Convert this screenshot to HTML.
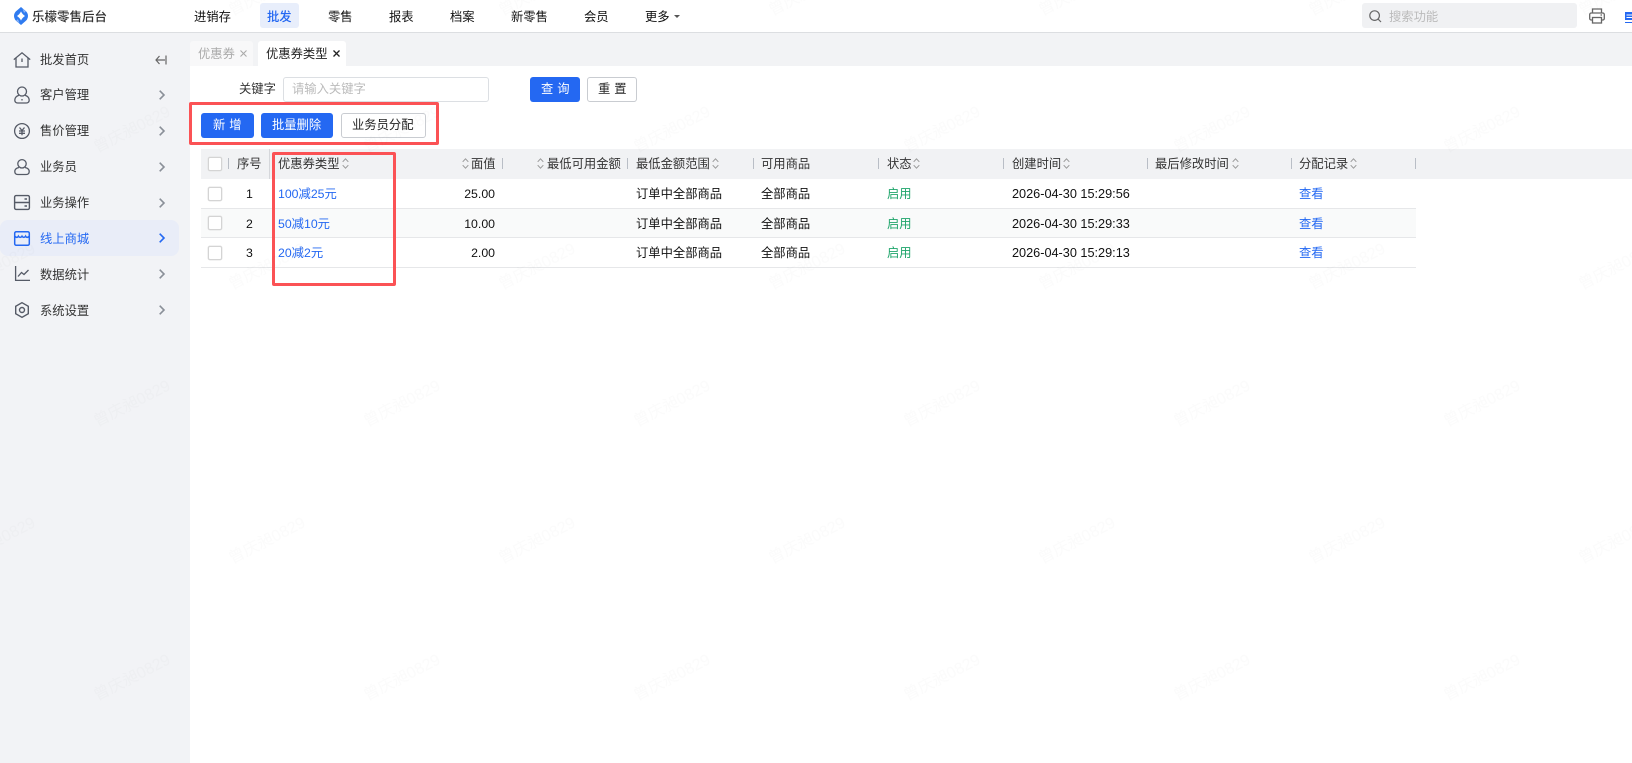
<!DOCTYPE html>
<html lang="zh"><head><meta charset="utf-8"><title>优惠券类型</title>
<style>
html,body{margin:0;padding:0;width:1632px;height:763px;overflow:hidden;background:#fff}
body{position:relative;font-family:"Liberation Sans","Noto Sans CJK SC",sans-serif;font-size:12.3px;color:#333}
.t{position:absolute;white-space:nowrap;line-height:18px}
.b{position:absolute}
.c{position:absolute;width:12px;height:12px;border:1px solid #d4d4d4;border-radius:2px;background:#fff;box-shadow:0 0 0 .5px #e4e4e4}
.s{position:absolute;width:1px;height:11px;top:158px;background:#b9bec6}
.k{color:#111}.l{color:#2468f2}.g{color:#1fa56b}
.h{color:#333}
.d{font-size:12.7px}
svg{position:absolute;overflow:visible}
.red{position:absolute;border:3px solid #fb5255;border-radius:2px;box-sizing:border-box}
</style></head><body>

<!-- backgrounds -->
<div class="b" style="left:0;top:33px;width:1632px;height:730px;background:#f2f3f5"></div>
<div class="b" style="left:0;top:33px;width:190px;height:730px;background:#f2f3f6"></div>
<div class="b" style="left:190px;top:66px;width:1442px;height:697px;background:#fff"></div>
<div class="b" style="left:0;top:32px;width:1632px;height:1px;background:#dcdee1"></div>

<!-- header -->
<svg style="left:14px;top:7px" width="14" height="18" viewBox="0 0 14 18"><path fill="#2f7bf0" d="M7 0 L10.500 3 Q14 5.500 14 9 Q14 12.500 10.500 15 L7 18 L3.500 15 Q0 12.500 0 9 Q0 5.500 3.500 3 Z"/><path fill="#fff" d="M7 4.400 Q8.200 7.200 11 9 Q8.200 10.800 7 13.600 Q5.800 10.800 3 9 Q5.800 7.200 7 4.400Z"/><path fill="#fff" d="M8.600 1.800 L11.800 4.800 L10 5.800Z" opacity=".45"/><path fill="#fff" d="M5.400 16.200 L2.200 13.200 L4 12.200Z" opacity=".45"/></svg>
<div class="t" style="left:32px;top:8px;font-size:12.5px;font-weight:500;color:#333">乐檬零售后台</div>

<div class="b" style="left:260px;top:3px;width:39px;height:25px;background:#e8eefb;border-radius:3px"></div>
<div class="t k" style="left:194px;top:8px;font-size:12.3px">进销存</div>
<div class="t l" style="left:267px;top:8px;font-size:12.3px;font-weight:500">批发</div>
<div class="t k" style="left:328px;top:8px;font-size:12.3px">零售</div>
<div class="t k" style="left:389px;top:8px;font-size:12.3px">报表</div>
<div class="t k" style="left:450px;top:8px;font-size:12.3px">档案</div>
<div class="t k" style="left:511px;top:8px;font-size:12.3px">新零售</div>
<div class="t k" style="left:584px;top:8px;font-size:12.3px">会员</div>
<div class="t k" style="left:645px;top:8px;font-size:12.3px">更多</div>
<svg style="left:674px;top:15px" width="6" height="3" viewBox="0 0 6 3"><path fill="#555" d="M0 0H6L3 3Z"/></svg>

<div class="b" style="left:1362px;top:3px;width:215px;height:25px;background:#f0f1f3;border-radius:3px"></div>
<svg style="left:1369px;top:10px" width="13" height="13" viewBox="0 0 13 13" fill="none" stroke="#666" stroke-width="1.200"><circle cx="5.600" cy="5.600" r="4.800"/><path d="M9.200 9.200L12 12"/></svg>
<div class="t" style="left:1389px;top:8px;color:#bbb;font-size:12.3px">搜索功能</div>
<svg style="left:1589px;top:8px" width="16" height="16" viewBox="0 0 16 16" fill="none" stroke="#666" stroke-width="1.300"><path d="M3.500 5V1h9v4"/><rect x=".7" y="5" width="14.600" height="7" rx="1.500"/><rect x="3.500" y="9.500" width="9" height="5.500" fill="#fff"/><path d="M11.500 7h1.500"/></svg>
<svg style="left:1625px;top:12px" width="7" height="11" viewBox="0 0 7 11"><path fill="#2468f2" d="M0 0H7V8H0Z"/><path stroke="#fff" d="M1.500 3H7M1.500 5.500H7"/><path stroke="#2468f2" d="M0 10.500H7"/></svg>

<!-- sidebar -->
<div class="b" style="left:0;top:220px;width:179px;height:36px;background:#e9edf8;border-radius:8px"></div>
<svg style="left:13px;top:52px" width="18" height="16" viewBox="0 0 18 16" fill="none" stroke="#555a66" stroke-width="1.300"><path d="M.8 7.600L9 .8l8.200 6.800"/><path d="M3 6v9h12V6"/><path d="M9 6.500v3.500"/></svg>
<svg style="left:14px;top:86px" width="16" height="18" viewBox="0 0 16 18" fill="none" stroke="#555a66" stroke-width="1.300"><circle cx="8" cy="5.500" r="4.500"/><path d="M5 9.200C2.500 10 .8 11.500.8 14c0 2 1.200 3 3 3h8.400c1.800 0 3-1 3-3 0-2.500-1.700-4-4.200-4.800"/><path d="M8 13v1.500"/></svg>
<svg style="left:14px;top:123px" width="16" height="16" viewBox="0 0 16 16" fill="none" stroke="#555a66" stroke-width="1.300"><circle cx="8" cy="8" r="7.400"/><path d="M5.500 4.500L8 7.500l2.500-3M5 8h6M5 10.300h6M8 7.500V12.200"/></svg>
<svg style="left:14px;top:159px" width="16" height="16" viewBox="0 0 16 16" fill="none" stroke="#555a66" stroke-width="1.300"><circle cx="8" cy="4.800" r="4.200"/><path d="M5 8.500C2.500 9 .8 10.500.8 12.500c0 2 1.200 3 3 3h8.400c1.800 0 3-1 3-3 0-2-1.700-3.500-4.200-4"/></svg>
<svg style="left:14px;top:195px" width="16" height="15" viewBox="0 0 16 15" fill="none" stroke="#555a66" stroke-width="1.400"><rect x=".6" y=".6" width="14.800" height="13.800" rx="1.500"/><path d="M.6 7.500h14.800M10.500 4h2.500M10.500 11h2.500"/></svg>
<svg style="left:14px;top:231px" width="16" height="15" viewBox="0 0 16 15" fill="none" stroke="#2468f2" stroke-width="1.500"><rect x=".7" y=".7" width="14.600" height="13.600" rx="1.500"/><path d="M.7 5.200c1.500 1.500 3 1.500 3.700 0 .8 1.500 2.800 1.500 3.600 0 .8 1.500 2.800 1.500 3.600 0 .7 1.500 2.200 1.500 3.700 0"/></svg>
<svg style="left:15px;top:266px" width="15" height="15" viewBox="0 0 15 15" fill="none" stroke="#555a66" stroke-width="1.300"><path d="M.6 0v14.400H15"/><path d="M3 10.500l3.500-4 2.500 2 4.500-4.500"/></svg>
<svg style="left:15px;top:302px" width="14" height="16" viewBox="0 0 14 16" fill="none" stroke="#555a66" stroke-width="1.400"><path d="M7 .7l6.300 3.600v7.400L7 15.300.7 11.700V4.300Z"/><circle cx="7" cy="8" r="2.500"/></svg>

<div class="t" style="left:40px;top:51px">批发首页</div>
<div class="t" style="left:40px;top:86px">客户管理</div>
<div class="t" style="left:40px;top:122px">售价管理</div>
<div class="t" style="left:40px;top:158px">业务员</div>
<div class="t" style="left:40px;top:194px">业务操作</div>
<div class="t l" style="left:40px;top:230px">线上商城</div>
<div class="t" style="left:40px;top:266px">数据统计</div>
<div class="t" style="left:40px;top:302px">系统设置</div>

<svg style="left:155px;top:55px" width="12" height="10" viewBox="0 0 12 10" fill="none" stroke="#666" stroke-width="1.200"><path d="M4.500 1L1 5l3.500 4M1 5h9M11 .5v9"/></svg>
<svg style="left:159px;top:90px" width="6" height="10" viewBox="0 0 6 10" fill="none" stroke="#8a8f98" stroke-width="1.600"><path d="M.7.700L5 5 .7 9.300"/></svg>
<svg style="left:159px;top:126px" width="6" height="10" viewBox="0 0 6 10" fill="none" stroke="#8a8f98" stroke-width="1.600"><path d="M.7.700L5 5 .7 9.300"/></svg>
<svg style="left:159px;top:162px" width="6" height="10" viewBox="0 0 6 10" fill="none" stroke="#8a8f98" stroke-width="1.600"><path d="M.7.700L5 5 .7 9.300"/></svg>
<svg style="left:159px;top:198px" width="6" height="10" viewBox="0 0 6 10" fill="none" stroke="#8a8f98" stroke-width="1.600"><path d="M.7.700L5 5 .7 9.300"/></svg>
<svg style="left:159px;top:233px" width="6" height="10" viewBox="0 0 6 10" fill="none" stroke="#2468f2" stroke-width="1.600"><path d="M.7.700L5 5 .7 9.300"/></svg>
<svg style="left:159px;top:269px" width="6" height="10" viewBox="0 0 6 10" fill="none" stroke="#8a8f98" stroke-width="1.600"><path d="M.7.700L5 5 .7 9.300"/></svg>
<svg style="left:159px;top:305px" width="6" height="10" viewBox="0 0 6 10" fill="none" stroke="#8a8f98" stroke-width="1.600"><path d="M.7.700L5 5 .7 9.300"/></svg>

<!-- tabs -->
<div class="b" style="left:190px;top:41px;width:63px;height:25px;background:#f8f8f9;border-radius:3px 3px 0 0"></div>
<div class="b" style="left:258px;top:41px;width:88px;height:25px;background:#fff;border-radius:3px 3px 0 0"></div>
<div class="t" style="left:198px;top:45px;color:#aaa">优惠券</div>
<svg style="left:240px;top:50px" width="7" height="7" viewBox="0 0 7 7" fill="none" stroke="#aaa" stroke-width="1.100"><path d="M.5.500l6 6M6.500.500l-6 6"/></svg>
<div class="t" style="left:266px;top:45px;color:#222">优惠券类型</div>
<svg style="left:333px;top:50px" width="7" height="7" viewBox="0 0 7 7" fill="none" stroke="#222" stroke-width="1.300"><path d="M.5.500l6 6M6.500.500l-6 6"/></svg>

<!-- filter -->
<div class="t" style="left:239px;top:80px">关键字</div>
<div class="b" style="left:283px;top:77px;width:204px;height:23px;border:1px solid #dcdfe3;border-radius:3px;background:#fff"></div>
<div class="t" style="left:292px;top:80px;color:#bbb">请输入关键字</div>
<div class="b" style="left:530px;top:77px;width:50px;height:25px;background:#2468f2;border-radius:3px"></div>
<div class="t" style="left:541px;top:80px;color:#fff;letter-spacing:4px">查询</div>
<div class="b" style="left:587px;top:77px;width:48px;height:23px;border:1px solid #c9ccd1;border-radius:3px;background:#fff"></div>
<div class="t" style="left:598px;top:80px;color:#222;letter-spacing:4px">重置</div>

<!-- toolbar -->
<div class="b" style="left:201px;top:113px;width:53px;height:25px;background:#2468f2;border-radius:3px"></div>
<div class="t" style="left:213px;top:116px;color:#fff;letter-spacing:4px">新增</div>
<div class="b" style="left:261px;top:113px;width:72px;height:25px;background:#2468f2;border-radius:3px"></div>
<div class="t" style="left:272px;top:116px;color:#fff">批量删除</div>
<div class="b" style="left:341px;top:113px;width:83px;height:23px;border:1px solid #c9ccd1;border-radius:3px;background:#fff"></div>
<div class="t" style="left:352px;top:116px;color:#222">业务员分配</div>

<!-- table -->
<div class="b" style="left:201px;top:149px;width:1431px;height:30px;background:#f1f2f4"></div>
<div class="b" style="left:201px;top:209px;width:1215px;height:28px;background:#f9fafa"></div>
<div class="b" style="left:201px;top:208px;width:1215px;height:1px;background:#e6e7e9"></div>
<div class="b" style="left:201px;top:237px;width:1215px;height:1px;background:#e6e7e9"></div>
<div class="b" style="left:201px;top:267px;width:1215px;height:1px;background:#e6e7e9"></div>
<div class="b" style="left:269px;top:149px;width:1px;height:30px;background:#d5d7db"></div>

<div class="s" style="left:228px"></div>
<div class="s" style="left:502px"></div>
<div class="s" style="left:627px"></div>
<div class="s" style="left:753px"></div>
<div class="s" style="left:878px"></div>
<div class="s" style="left:1003px"></div>
<div class="s" style="left:1147px"></div>
<div class="s" style="left:1291px"></div>
<div class="s" style="left:1415px"></div>

<div class="c" style="left:208px;top:157px"></div>
<div class="c" style="left:208px;top:187px"></div>
<div class="c" style="left:208px;top:216px"></div>
<div class="c" style="left:208px;top:246px"></div>

<div class="t h" style="left:237px;top:155px">序号</div>
<div class="t h" style="left:278px;top:155px">优惠券类型</div>
<div class="t h" style="left:471px;top:155px">面值</div>
<div class="t h" style="left:547px;top:155px">最低可用金额</div>
<div class="t h" style="left:636px;top:155px">最低金额范围</div>
<div class="t h" style="left:761px;top:155px">可用商品</div>
<div class="t h" style="left:887px;top:155px">状态</div>
<div class="t h" style="left:1012px;top:155px">创建时间</div>
<div class="t h" style="left:1155px;top:155px">最后修改时间</div>
<div class="t h" style="left:1299px;top:155px">分配记录</div>

<svg style="left:342px;top:158px" width="7" height="11" viewBox="0 0 7 11" fill="none" stroke="#999" stroke-width="1"><path d="M.7 3.800L3.500.8l2.800 3M.7 7.200l2.800 3 2.800-3"/></svg>
<svg style="left:462px;top:158px" width="7" height="11" viewBox="0 0 7 11" fill="none" stroke="#999" stroke-width="1"><path d="M.7 3.800L3.500.8l2.800 3M.7 7.200l2.800 3 2.800-3"/></svg>
<svg style="left:537px;top:158px" width="7" height="11" viewBox="0 0 7 11" fill="none" stroke="#999" stroke-width="1"><path d="M.7 3.800L3.500.8l2.800 3M.7 7.200l2.800 3 2.800-3"/></svg>
<svg style="left:712px;top:158px" width="7" height="11" viewBox="0 0 7 11" fill="none" stroke="#999" stroke-width="1"><path d="M.7 3.800L3.500.8l2.800 3M.7 7.200l2.800 3 2.800-3"/></svg>
<svg style="left:913px;top:158px" width="7" height="11" viewBox="0 0 7 11" fill="none" stroke="#999" stroke-width="1"><path d="M.7 3.800L3.500.8l2.800 3M.7 7.200l2.800 3 2.800-3"/></svg>
<svg style="left:1063px;top:158px" width="7" height="11" viewBox="0 0 7 11" fill="none" stroke="#999" stroke-width="1"><path d="M.7 3.800L3.500.8l2.800 3M.7 7.200l2.800 3 2.800-3"/></svg>
<svg style="left:1232px;top:158px" width="7" height="11" viewBox="0 0 7 11" fill="none" stroke="#999" stroke-width="1"><path d="M.7 3.800L3.500.8l2.800 3M.7 7.200l2.800 3 2.800-3"/></svg>
<svg style="left:1350px;top:158px" width="7" height="11" viewBox="0 0 7 11" fill="none" stroke="#999" stroke-width="1"><path d="M.7 3.800L3.500.8l2.800 3M.7 7.200l2.800 3 2.800-3"/></svg>

<!-- row 1 -->
<div class="t k" style="left:246px;top:185px">1</div>
<div class="t l" style="left:278px;top:185px">100减25元</div>
<div class="t k" style="right:1137px;top:185px">25.00</div>
<div class="t k" style="left:636px;top:185px">订单中全部商品</div>
<div class="t k" style="left:761px;top:185px">全部商品</div>
<div class="t g" style="left:887px;top:185px">启用</div>
<div class="t k d" style="left:1012px;top:185px">2026-04-30 15:29:56</div>
<div class="t l" style="left:1299px;top:185px">查看</div>
<!-- row 2 -->
<div class="t k" style="left:246px;top:215px">2</div>
<div class="t l" style="left:278px;top:215px">50减10元</div>
<div class="t k" style="right:1137px;top:215px">10.00</div>
<div class="t k" style="left:636px;top:215px">订单中全部商品</div>
<div class="t k" style="left:761px;top:215px">全部商品</div>
<div class="t g" style="left:887px;top:215px">启用</div>
<div class="t k d" style="left:1012px;top:215px">2026-04-30 15:29:33</div>
<div class="t l" style="left:1299px;top:215px">查看</div>
<!-- row 3 -->
<div class="t k" style="left:246px;top:244px">3</div>
<div class="t l" style="left:278px;top:244px">20减2元</div>
<div class="t k" style="right:1137px;top:244px">2.00</div>
<div class="t k" style="left:636px;top:244px">订单中全部商品</div>
<div class="t k" style="left:761px;top:244px">全部商品</div>
<div class="t g" style="left:887px;top:244px">启用</div>
<div class="t k d" style="left:1012px;top:244px">2026-04-30 15:29:13</div>
<div class="t l" style="left:1299px;top:244px">查看</div>

<!-- annotations -->
<div class="red" style="left:189px;top:102px;width:250px;height:43px"></div>
<div class="red" style="left:272px;top:152px;width:124px;height:134px"></div>

<!-- watermark -->
<svg style="left:0;top:0;pointer-events:none" width="1632" height="763">
<defs><pattern id="wm" patternUnits="userSpaceOnUse" x="357" y="367" width="270" height="274">
<g font-family="'Liberation Sans','Noto Sans CJK SC',sans-serif" font-size="16" fill="#000" fill-opacity=".016">
<text transform="translate(10 60) rotate(-27)">曾庆昶0829</text>
<text transform="translate(145 197) rotate(-27)">曾庆昶0829</text>
</g></pattern></defs>
<rect width="1632" height="763" fill="url(#wm)"/>
</svg>
</body></html>
